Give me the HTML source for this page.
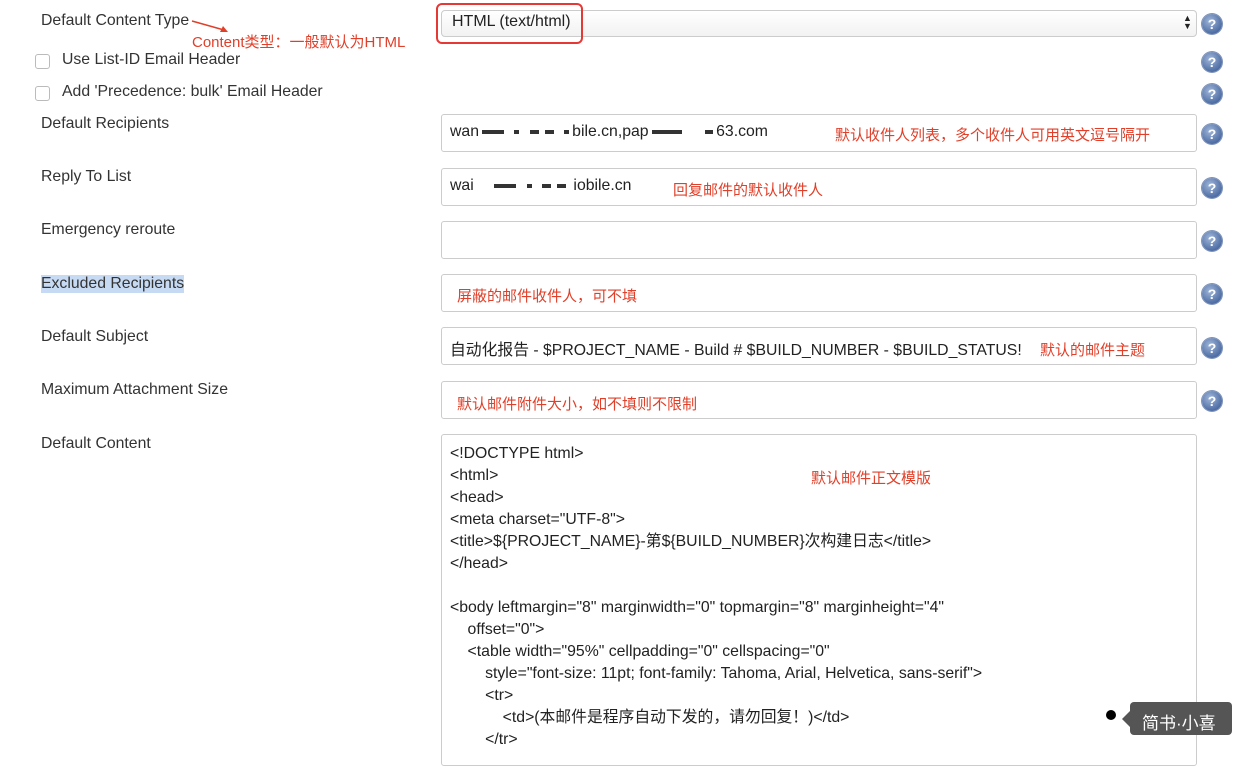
<!DOCTYPE html>
<html><head><meta charset="utf-8"><style>
body{margin:0;width:1240px;height:751px;overflow:hidden;background:#fff;font-family:"Liberation Sans","Noto Sans CJK SC",sans-serif;color:#333;position:relative}
.a{position:absolute;white-space:pre}
.l{font-size:15.8px;left:41px}
.in{position:absolute;left:441px;width:754px;height:36px;border:1px solid #ccc;border-radius:3px;background:#fff}
.t{position:absolute;font-size:15.8px;color:#222;white-space:pre}
.r{color:#e0402a;font-size:15px}
.h{position:absolute;left:1202px;width:20px;height:20px;border-radius:50%;background:radial-gradient(circle at 40% 35%,#9fb6d8,#4f6ea5 70%,#3c5890);color:#fff;font:bold 14px/20px "Liberation Sans",sans-serif;text-align:center;box-shadow:0 0 0 1px #7d92b8}
.cb{position:absolute;left:35px;width:13px;height:13px;border:1px solid #bbb;border-radius:3px}
.bl{display:inline-block;background:#333;height:4px;vertical-align:middle;margin:0 3px}
</style></head><body>
<div class="a l" style="top:12px">Default Content Type</div>
<svg class="a" style="left:190px;top:18px" width="40" height="18"><line x1="2" y1="3" x2="34" y2="12" stroke="#e0402a" stroke-width="1.5"/><polygon points="38,14 30,14 33,8" fill="#e0402a"/></svg>
<div class="a r" style="left:192px;top:31px">Content类型：一般默认为HTML</div>
<div style="position:absolute;left:441px;top:10px;width:754px;height:25px;border:1px solid #ccc;border-radius:4px;background:linear-gradient(#fff,#f2f2f2)"></div>
<div class="a" style="left:1183px;top:14px;font-size:9px;line-height:8px;color:#222">▲<br>▼</div>
<div style="position:absolute;left:436px;top:3px;width:143px;height:37px;border:2.5px solid #e53935;border-radius:6px"></div>
<div class="t" style="left:452px;top:13px;font-size:16px">HTML (text/html)</div>
<div class="cb" style="top:54px"></div><div class="a l" style="left:62px;top:51px">Use List-ID Email Header</div>
<div class="cb" style="top:86px"></div><div class="a l" style="left:62px;top:83px">Add 'Precedence: bulk' Email Header</div>
<div class="h" style="top:14px">?</div><div class="h" style="top:52px">?</div><div class="h" style="top:84px">?</div>

<div class="a l" style="top:115px">Default Recipients</div>
<div class="in" style="top:114px"></div><div class="h" style="top:124px">?</div>
<div class="t" style="left:450px;top:123px">wan<span class="bl" style="width:22px"></span> <span class="bl" style="width:5px"></span> <span class="bl" style="width:9px"></span><span class="bl" style="width:9px"></span> <span class="bl" style="width:5px"></span>bile.cn,pap<span class="bl" style="width:30px"></span>    <span class="bl" style="width:8px"></span>63.com</div>
<div class="a r" style="left:835px;top:124px">默认收件人列表，多个收件人可用英文逗号隔开</div>

<div class="a l" style="top:168px">Reply To List</div>
<div class="in" style="top:168px"></div><div class="h" style="top:178px">?</div>
<div class="t" style="left:450px;top:177px">wai    <span class="bl" style="width:22px"></span> <span class="bl" style="width:5px"></span> <span class="bl" style="width:9px"></span><span class="bl" style="width:9px"></span> iobile.cn</div>
<div class="a r" style="left:673px;top:179px">回复邮件的默认收件人</div>

<div class="a l" style="top:221px">Emergency reroute</div>
<div class="in" style="top:221px"></div><div class="h" style="top:231px">?</div>

<div class="a l" style="top:275px;background:#c7daf3">Excluded Recipients</div>
<div class="in" style="top:274px"></div><div class="h" style="top:284px">?</div>
<div class="a r" style="left:457px;top:285px">屏蔽的邮件收件人，可不填</div>

<div class="a l" style="top:328px">Default Subject</div>
<div class="in" style="top:327px"></div><div class="h" style="top:338px">?</div>
<div class="t" style="left:450px;top:337px">自动化报告 - $PROJECT_NAME - Build # $BUILD_NUMBER - $BUILD_STATUS!</div>
<div class="a r" style="left:1040px;top:339px">默认的邮件主题</div>

<div class="a l" style="top:381px">Maximum Attachment Size</div>
<div class="in" style="top:381px"></div><div class="h" style="top:391px">?</div>
<div class="a r" style="left:457px;top:393px">默认邮件附件大小，如不填则不限制</div>

<div class="a l" style="top:435px">Default Content</div>
<div class="in" style="top:434px;height:330px"></div>
<div class="t" style="left:450px;top:443px;line-height:22px">&lt;!DOCTYPE html&gt;
&lt;html&gt;
&lt;head&gt;
&lt;meta charset="UTF-8"&gt;
&lt;title&gt;${PROJECT_NAME}-第${BUILD_NUMBER}次构建日志&lt;/title&gt;
&lt;/head&gt;

&lt;body leftmargin="8" marginwidth="0" topmargin="8" marginheight="4"
    offset="0"&gt;
    &lt;table width="95%" cellpadding="0" cellspacing="0"
        style="font-size: 11pt; font-family: Tahoma, Arial, Helvetica, sans-serif"&gt;
        &lt;tr&gt;
            &lt;td&gt;(本邮件是程序自动下发的，请勿回复！)&lt;/td&gt;
        &lt;/tr&gt;</div>
<div class="a r" style="left:811px;top:467px">默认邮件正文模版</div>

<div style="position:absolute;left:1106px;top:710px;width:10px;height:10px;border-radius:50%;background:#000"></div>
<div style="position:absolute;left:1130px;top:702px;width:102px;height:33px;background:#555;border-radius:4px"></div>
<div style="position:absolute;left:1122px;top:711px;width:0;height:0;border:8px solid transparent;border-right-color:#555;border-left:0"></div>
<div class="a" style="left:1142px;top:709px;color:#fff;font-size:17px">简书·小喜</div>
</body></html>
